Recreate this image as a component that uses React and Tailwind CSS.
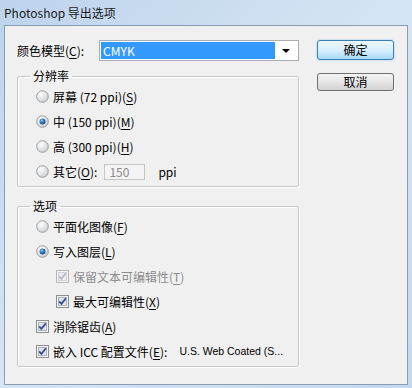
import React from "react";

const font = { fontFamily: '"Noto Sans CJK SC", "Noto Sans", sans-serif' };

function Radio({ checked }) {
  return (
    <svg width="13" height="13" viewBox="0 0 13 13" className="shrink-0">
      <defs>
        <radialGradient id={checked ? "rg1" : "rg0"} cx="0.35" cy="0.3" r="0.8">
          <stop offset="0" stopColor="#ffffff" />
          <stop offset="1" stopColor="#c9cbcd" />
        </radialGradient>
        <radialGradient id="dot" cx="0.4" cy="0.35" r="0.7">
          <stop offset="0" stopColor="#8fd0f4" />
          <stop offset="0.5" stopColor="#2a74b8" />
          <stop offset="1" stopColor="#1a4a86" />
        </radialGradient>
      </defs>
      <circle cx="6.5" cy="6.5" r="5.8" fill={`url(#${checked ? "rg1" : "rg0"})`} stroke="#9a9c9e" strokeWidth="1" />
      {checked && <circle cx="6.5" cy="6.5" r="3" fill="url(#dot)" />}
    </svg>
  );
}

function Check({ disabled }) {
  const c = disabled ? "#b4b9c4" : "#3a4f8c";
  return (
    <svg width="13" height="13" viewBox="0 0 13 13" className="shrink-0">
      <rect x="0.5" y="0.5" width="12" height="12" fill="#f4f4f4" stroke={disabled ? "#b8b8b8" : "#8e8f8f"} />
      <rect x="2.5" y="2.5" width="8" height="8" fill={disabled ? "#ececec" : "#dfe3ec"} stroke={disabled ? "#d4d4d4" : "#aeb3bd"} />
      <path d="M3.2 6.4 L5.4 8.8 L9.8 3.4" fill="none" stroke={c} strokeWidth="1.8" />
    </svg>
  );
}

function Row({ children, indent }) {
  return (
    <div className={`flex items-center h-[25px] gap-[4px] ${indent ? "pl-[38px]" : "pl-[18px]"}`}>
      {children}
    </div>
  );
}

function U({ children }) {
  return <span className="underline underline-offset-2">{children}</span>;
}

export default function App() {
  return (
    <div
      className="w-[412px] h-[388px] flex flex-col bg-gradient-to-br from-[#bdd3ec] via-[#d6e5f4] to-[#c3d8ef] text-[12px] text-black"
      style={font}
    >
      <div className="h-[25px] flex items-center pl-[4px] text-[12px] text-[#1a1a1a]">Photoshop 导出选项</div>
      <div className="mx-[4px] mb-[3px] flex-1 bg-[#f0f0f0] border border-[#8a9db5] flex pl-[12px] pt-[14px]">
        <div className="w-[282px] flex flex-col">
          <div className="flex items-center h-[21px]">
            <span className="w-[83px]">
              颜色模型(<U>C</U>):
            </span>
            <div className="w-[202px] h-[21px] border border-[#abadb3] bg-white flex items-center p-[1px]">
              <div className="flex-1 h-full bg-[#3399ff] text-white flex items-center pl-[2px]">CMYK</div>
              <div className="w-[22px] flex justify-center items-center">
                <div className="w-0 h-0 border-l-[4px] border-r-[4px] border-t-[4px] border-l-transparent border-r-transparent border-t-black" />
              </div>
            </div>
          </div>

          <fieldset className="mt-[8px] border border-[#c8c8c8] shadow-[inset_1px_1px_0_#fff,1px_1px_0_#fff] rounded-[2px] h-[118px] pt-[1px]">
            <legend className="ml-[12px] px-[3px] leading-[14px]">分辨率</legend>
            <Row>
              <Radio />
              <span>屏幕 (72 ppi)(<U>S</U>)</span>
            </Row>
            <Row>
              <Radio checked />
              <span>中 (150 ppi)(<U>M</U>)</span>
            </Row>
            <Row>
              <Radio />
              <span>高 (300 ppi)(<U>H</U>)</span>
            </Row>
            <Row>
              <Radio />
              <span>其它(<U>O</U>):</span>
              <div className="ml-[3px] w-[41px] h-[16px] border border-[#c6c6c6] bg-[#f4f4f4] text-[#8a8a8a] flex items-center pl-[4px] text-[12px]">150</div>
              <span className="ml-[9px]">ppi</span>
            </Row>
          </fieldset>

          <fieldset className="mt-[12px] border border-[#c8c8c8] shadow-[inset_1px_1px_0_#fff,1px_1px_0_#fff] rounded-[2px] h-[168px] pt-[1px]">
            <legend className="ml-[12px] px-[3px] leading-[14px]">选项</legend>
            <Row>
              <Radio />
              <span>平面化图像(<U>F</U>)</span>
            </Row>
            <Row>
              <Radio checked />
              <span>写入图层(<U>L</U>)</span>
            </Row>
            <Row indent>
              <Check disabled />
              <span className="text-[#8d8d8d]">保留文本可编辑性(<U>T</U>)</span>
            </Row>
            <Row indent>
              <Check />
              <span>最大可编辑性(<U>X</U>)</span>
            </Row>
            <Row>
              <Check />
              <span>消除锯齿(<U>A</U>)</span>
            </Row>
            <Row>
              <Check />
              <span>嵌入 ICC 配置文件(<U>E</U>):</span>
              <span
                className="ml-[8px] text-[10.5px]"
                style={{ fontFamily: '"Liberation Sans", Arial, sans-serif' }}
              >
                U.S. Web Coated (S...
              </span>
            </Row>
          </fieldset>
        </div>

        <div className="ml-[18px] flex flex-col gap-[13px]">
          <button className="w-[77px] h-[20px] rounded-[3px] border border-[#3c7fb1] bg-gradient-to-b from-[#eaf6fd] via-[#d9f0fc] to-[#a7d9f5] shadow-[0_0_2px_#7fc6f0] text-[12px] leading-none">
            确定
          </button>
          <button className="w-[77px] h-[18px] rounded-[3px] border border-[#707070] bg-gradient-to-b from-[#f4f4f4] via-[#e6e6e6] to-[#d2d2d2] text-[12px] leading-none">
            取消
          </button>
        </div>
      </div>
    </div>
  );
}
